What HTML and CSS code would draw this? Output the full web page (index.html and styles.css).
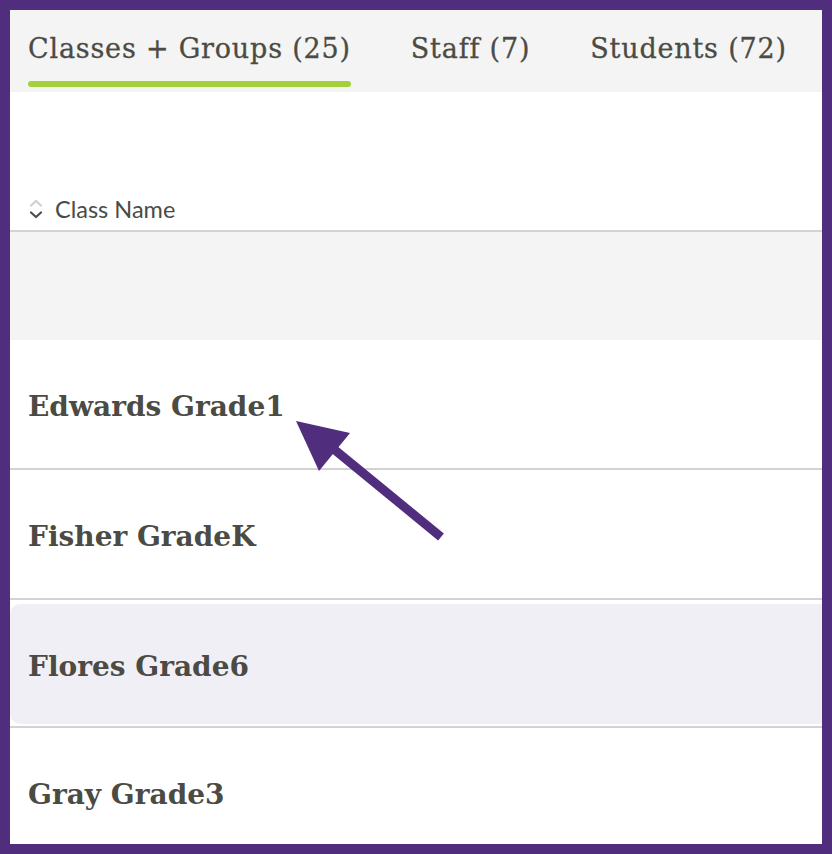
FILE: index.html
```html
<!DOCTYPE html>
<html lang="en">
<head>
<meta charset="utf-8">
<title>Classes + Groups</title>
<link rel="stylesheet" href="styles.css">
</head>
<body>
<div class="frame">
  <nav class="tabs">
    <div class="tab active">Classes + Groups (25)</div>
    <div class="tab">Staff (7)</div>
    <div class="tab">Students (72)</div>
  </nav>
  <div class="table-head">
    <div class="col-head">
      <svg class="sort" width="16" height="20" viewBox="0 0 16 20">
        <path d="M3 6.5 L8 2 L13 6.5" fill="none" stroke="#cfcfcf" stroke-width="2.2" stroke-linecap="round" stroke-linejoin="round"/>
        <path d="M3 13.5 L8 18 L13 13.5" fill="none" stroke="#4d4d46" stroke-width="2.2" stroke-linecap="round" stroke-linejoin="round"/>
      </svg>
      <span>Class Name</span>
    </div>
  </div>
  <div class="spacer"></div>
  <div class="row"><div class="cell">Edwards Grade1</div></div>
  <div class="row"><div class="cell">Fisher GradeK</div></div>
  <div class="row selected"><div class="cell">Flores Grade6</div></div>
  <div class="row"><div class="cell">Gray Grade3</div></div>
</div>
<svg class="annotation" width="832" height="854" viewBox="0 0 832 854">
  <line x1="441" y1="537" x2="330" y2="446" stroke="#512d7d" stroke-width="9" stroke-linecap="butt"/>
  <polygon points="296,421 350,433 319,471" fill="#512d7d"/>
</svg>
</body>
</html>
```

FILE: styles.css
```css
html, body {
  margin: 0;
  padding: 0;
}
body {
  background: #512d7d;
  padding: 10px;
  width: 812px;
  height: 834px;
  position: relative;
}
.frame {
  width: 812px;
  height: 834px;
  background: #ffffff;
  overflow: hidden;
  color: #4b4b44;
}
.tabs {
  display: flex;
  gap: 60px;
  height: 82px;
  padding: 0 18px;
  background: #f4f4f4;
  box-sizing: border-box;
}
.tab {
  font-family: "DejaVu Serif", serif;
  font-size: 27px;
  letter-spacing: 0.8px;
  line-height: 32px;
  padding-top: 23px;
  white-space: nowrap;
  -webkit-text-stroke: 0.3px #4b4b44;
}
.tab.active::after {
  content: "";
  display: block;
  height: 6px;
  border-radius: 3px;
  background: #a4d13a;
  margin-top: 16px;
}
.table-head {
  height: 138px;
  border-bottom: 2px solid #d2d2d2;
  display: flex;
  align-items: flex-end;
  padding: 0 18px;
  box-sizing: content-box;
}
.col-head {
  display: flex;
  align-items: center;
  gap: 11px;
  font-family: Lato, sans-serif;
  font-size: 23.5px;
  line-height: 26px;
  margin-bottom: 8px;
}
.sort {
  display: block;
}
.spacer {
  height: 108px;
  background: #f4f4f4;
}
.row {
  height: 128px;
  border-bottom: 2px solid #d2d2d2;
}
.cell {
  height: 128px;
  box-sizing: border-box;
  padding: 50px 18px 0;
  font-family: "DejaVu Serif", serif;
  font-weight: bold;
  font-size: 28px;
  line-height: 34px;
  white-space: nowrap;
}
.row.selected {
  padding: 4px 0;
  box-sizing: border-box;
}
.row.selected .cell {
  height: 120px;
  padding-top: 46px;
  background: #f1eff6;
  border-radius: 10px 0 0 10px;
}
.annotation {
  position: absolute;
  left: 0;
  top: 0;
  pointer-events: none;
}
```
